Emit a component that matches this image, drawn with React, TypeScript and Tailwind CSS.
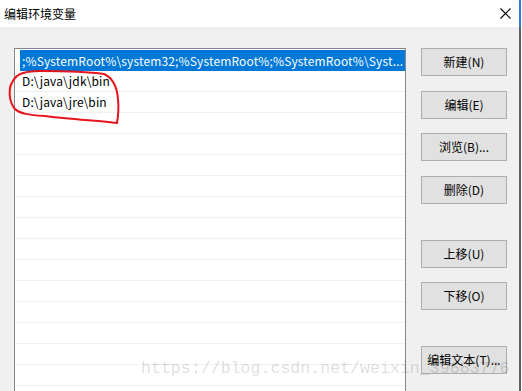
import React from "react";

const FONT = { fontFamily: '"Microsoft YaHei UI","Noto Sans CJK SC","Noto Sans",sans-serif' };

function Btn({ label, mt }: { label: string; mt: string }) {
  return (
    <div
      className={`${mt} w-[86px] h-[28px] flex items-center justify-center bg-[#e1e1e1] border border-[#adadad] text-[12px] text-black`}
    >
      {label}
    </div>
  );
}

export default function App() {
  const rows = Array.from({ length: 16 });
  return (
    <div className="relative w-[522px] h-[391px] overflow-hidden bg-white flex" style={FONT}>
      <div className="w-[519px] h-full flex flex-col bg-[#f0f0f0]">
        <div className="h-[27px] bg-white flex items-center justify-between pl-[4px] pr-[8px] shrink-0">
          <span className="text-[12px] text-black leading-none">编辑环境变量</span>
          <svg width="11" height="11" viewBox="0 0 11 11">
            <path d="M0.5 0.5 L10.5 10.5 M10.5 0.5 L0.5 10.5" stroke="#000" strokeWidth="1.1" />
          </svg>
        </div>
        <div className="flex pt-[21px]">
          <div className="ml-[14px] w-[392px] h-[360px] border border-[#828790] bg-white pt-[1px] pl-[1px] overflow-hidden shrink-0">
            <div className="ml-[4px] h-[21px] bg-[#0078d7] text-white text-[12px] tracking-[0.14px] pl-[2px] flex items-center whitespace-nowrap overflow-hidden">
              ;%SystemRoot%\system32;%SystemRoot%;%SystemRoot%\Syst...
            </div>
            <div className="h-[21px] border-b border-[#f0f0f0] text-[12px] tracking-[0.14px] text-black pl-[6px] flex items-center">
              D:\java\jdk\bin
            </div>
            <div className="h-[21px] border-b border-[#f0f0f0] text-[12px] tracking-[0.14px] text-black pl-[6px] flex items-center">
              D:\java\jre\bin
            </div>
            {rows.map((_, i) => (
              <div key={i} className="h-[21px] border-b border-[#f0f0f0]" />
            ))}
          </div>
          <div className="ml-[15px] flex flex-col">
            <Btn label="新建(N)" mt="mt-[0px]" />
            <Btn label="编辑(E)" mt="mt-[15px]" />
            <Btn label="浏览(B)..." mt="mt-[14px]" />
            <Btn label="删除(D)" mt="mt-[15px]" />
            <Btn label="上移(U)" mt="mt-[36px]" />
            <Btn label="下移(O)" mt="mt-[14px]" />
            <Btn label="编辑文本(T)..." mt="mt-[36px]" />
          </div>
        </div>
      </div>
      <div className="w-[2px] h-full flex flex-col">
        <div className="h-[27px] bg-[#2b79d0]" />
        <div className="flex-1 bg-[#5a5f66]" />
      </div>
      <div className="w-[1px] h-full bg-white" />

      <div
        className="absolute left-[141px] top-[361px] text-[16.6px] leading-none text-black/15 whitespace-nowrap"
        style={{ fontFamily: '"Liberation Mono", monospace' }}
      >
        https://blog.csdn.net/weixin_39683776
      </div>

      <svg className="absolute left-0 top-0" width="522" height="391" viewBox="0 0 522 391">
        <path
          d="M14 79 C18 73 26 71 40 71 C60 71 90 72 104 74 C113 78 117 87 118 99 C119 109 118 117 117 123 C100 121 70 119 45 116 C30 115 19 114 14 108 C10 102 9 95 10 88 C11 83 13 80 17 76"
          fill="none"
          stroke="#e8141b"
          strokeWidth="2"
          strokeLinecap="round"
        />
      </svg>
    </div>
  );
}
